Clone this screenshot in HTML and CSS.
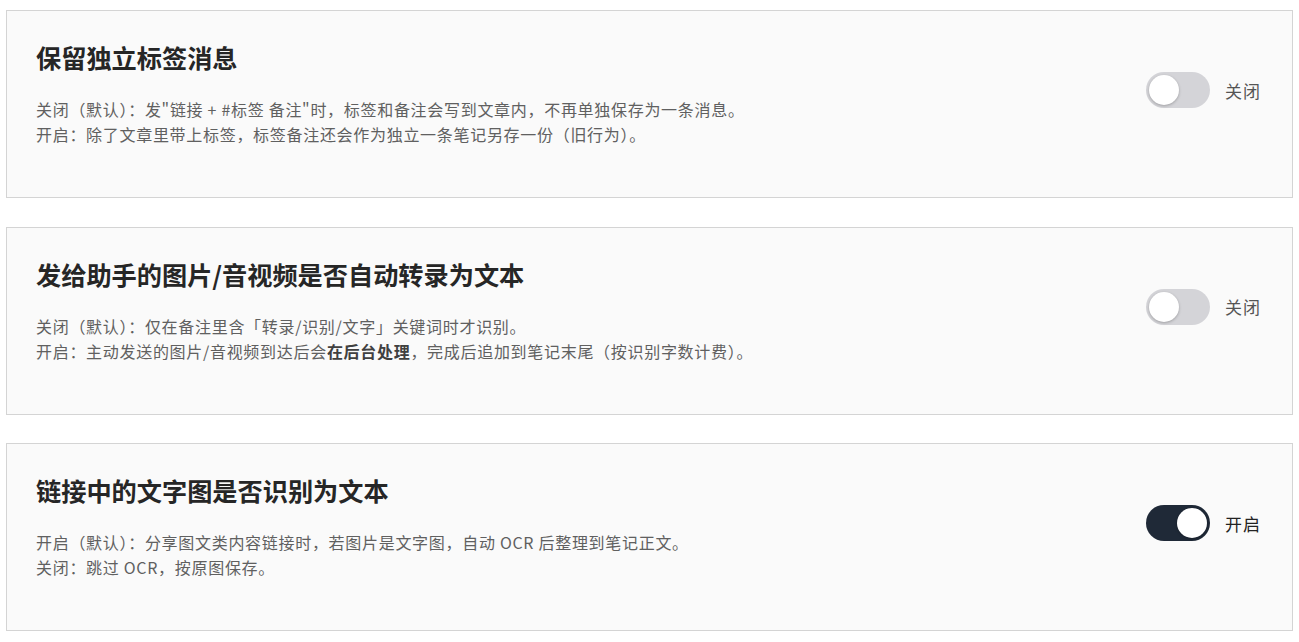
FILE: index.html
```html
<!DOCTYPE html>
<html lang="zh-CN">
<head>
    <meta charset="utf-8">
    <meta name="viewport" content="width=device-width, initial-scale=1.0">
    <title>设置</title>
    <link rel="stylesheet" href="styles.css">
</head>
<body>
    <div class="settings">
        <div class="card">
            <div class="card-body">
                <h2>保留独立标签消息</h2>
                <p class="desc">关闭（默认）：发"链接 + #标签 备注"时，标签和备注会写到文章内，不再单独保存为一条消息。<br>开启：除了文章里带上标签，标签备注还会作为独立一条笔记另存一份（旧行为）。</p>
            </div>
            <label class="switch-wrap">
                <span class="switch"><span class="knob"></span></span>
                <span class="switch-label">关闭</span>
            </label>
        </div>

        <div class="card">
            <div class="card-body">
                <h2>发给助手的图片/音视频是否自动转录为文本</h2>
                <p class="desc">关闭（默认）：仅在备注里含「转录/识别/文字」关键词时才识别。<br>开启：主动发送的图片/音视频到达后会<strong>在后台处理</strong>，完成后追加到笔记末尾（按识别字数计费）。</p>
            </div>
            <label class="switch-wrap">
                <span class="switch"><span class="knob"></span></span>
                <span class="switch-label">关闭</span>
            </label>
        </div>

        <div class="card">
            <div class="card-body">
                <h2>链接中的文字图是否识别为文本</h2>
                <p class="desc">开启（默认）：分享图文类内容链接时，若图片是文字图，自动 OCR 后整理到笔记正文。<br>关闭：跳过 OCR，按原图保存。</p>
            </div>
            <label class="switch-wrap on">
                <span class="switch"><span class="knob"></span></span>
                <span class="switch-label">开启</span>
            </label>
        </div>
    </div>
</body>
</html>
```

FILE: styles.css
```css
* {
    margin: 0;
    padding: 0;
    box-sizing: border-box;
}

body {
    background: #fff;
    font-family: "Noto Sans CJK SC", "Noto Sans", sans-serif;
    padding: 10px 6px;
}

.settings {
    display: flex;
    flex-direction: column;
    gap: 28.5px;
}

.card {
    display: flex;
    align-items: flex-start;
    background: #fafafa;
    border: 1px solid #d4d4d4;
    padding: 29px 31px 48px 29px;
    height: 188px;
}

.card-body {
    flex: 1;
}

h2 {
    font-size: 25.2px;
    line-height: 35px;
    font-weight: 700;
    color: #262626;
    margin-bottom: 22px;
}

.desc {
    font-size: 16px;
    line-height: 25px;
    letter-spacing: 0.7px;
    color: #606060;
}

.desc strong {
    color: #404040;
    font-weight: 700;
}

.switch-wrap {
    display: flex;
    align-items: center;
    gap: 15px;
    margin-top: 32px;
    margin-left: 1px;
    cursor: pointer;
}

.switch {
    width: 64px;
    height: 36px;
    border-radius: 18px;
    background: #d4d4d8;
    padding: 3px;
    display: flex;
}

.knob {
    width: 30px;
    height: 30px;
    border-radius: 50%;
    background: #fff;
    box-shadow: 0 1px 3px rgba(0, 0, 0, 0.25);
}

.switch-label {
    font-size: 17px;
    letter-spacing: 1px;
    color: #555;
}

.on .switch {
    background: #1f2937;
    justify-content: flex-end;
}

.on .switch-label {
    color: #222;
}
```
